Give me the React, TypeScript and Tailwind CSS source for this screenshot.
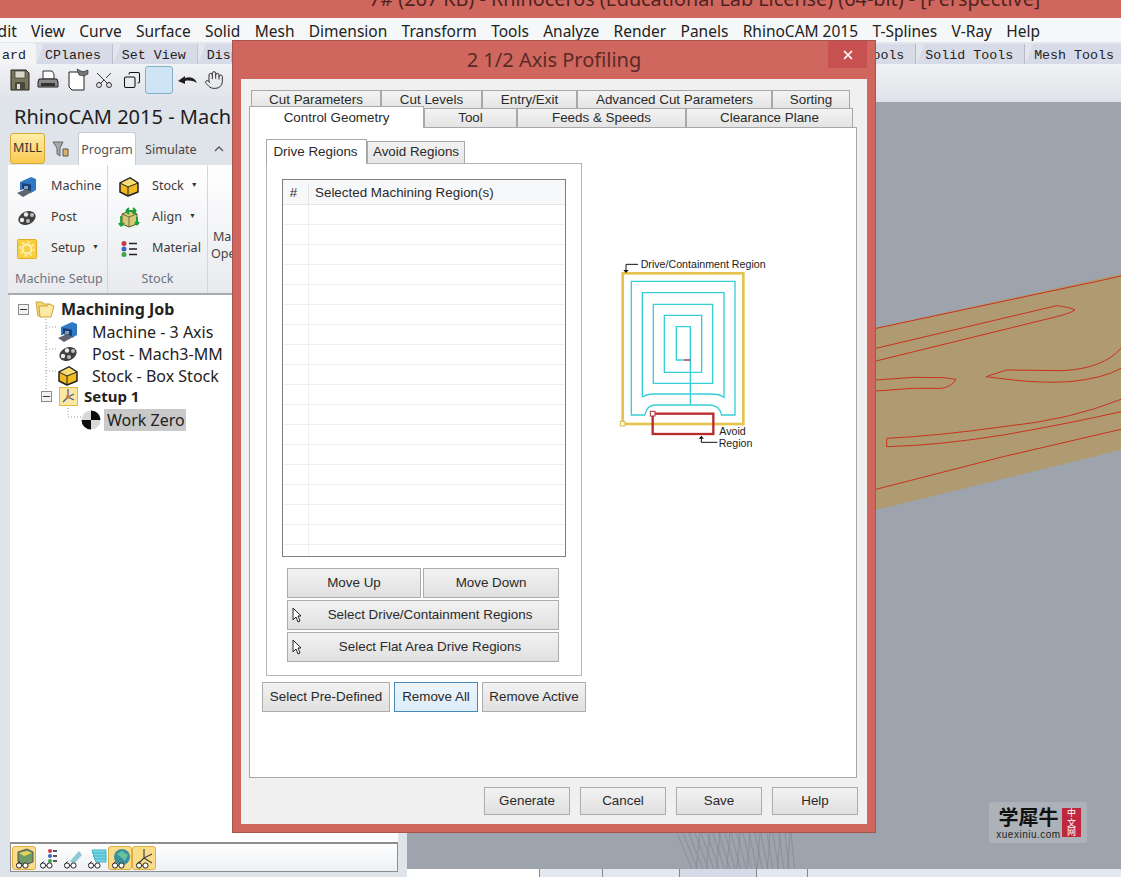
import { Copy, Hand, Scissors, X } from "lucide-react"

const menus = ["Edit", "View", "Curve", "Surface", "Solid", "Mesh", "Dimension", "Transform", "Tools", "Analyze", "Render", "Panels", "RhinoCAM 2015", "T-Splines", "V-Ray", "Help"]

const topTabs = ["CPlanes", "Set View", "Display", "Select", "Viewport", "Visibility", "Transform", "Tools", "Curve Tools", "Surface Tools", "Solid Tools", "Mesh Tools"]

function MachineIcon({ size = 20 }: { size?: number }) {
  return (
    <svg width={size} height={size} viewBox="0 0 20 20">
      <path d="M3 5l11-5 5 2v11l-5 3V8L5 7v6H3z" fill="#2f78c4" />
      <path d="M5 6l9 1.500V15L5 12z" fill="#173f78" />
      <path d="M0 16l9-4 6 3-9 5z" fill="#5f6570" />
      <path d="M8 9v3M10 9v3" stroke="#fff" strokeWidth="1" />
    </svg>
  )
}

function PostIcon({ size = 20 }: { size?: number }) {
  return (
    <svg width={size} height={size} viewBox="0 0 20 20">
      <ellipse cx="10" cy="10" rx="9" ry="6.500" fill="#3f3f3f" transform="rotate(-25 10 10)" />
      <circle cx="5" cy="12" r="2.200" fill="#ececec" />
      <circle cx="9" cy="6.500" r="2.200" fill="#ececec" />
      <circle cx="15" cy="7" r="2" fill="#bdbdbd" />
      <circle cx="11" cy="13" r="2" fill="#bdbdbd" />
    </svg>
  )
}

function StockIcon({ size = 20 }: { size?: number }) {
  return (
    <svg width={size} height={size} viewBox="0 0 20 20">
      <path d="M1 6l10-5 8 5v9l-10 4-8-4z" fill="#efb91f" stroke="#222" strokeWidth="1.500" strokeLinejoin="round" />
      <path d="M1 6l8 4 10-4-8-5z" fill="#f9dd74" stroke="#222" strokeWidth="1" strokeLinejoin="round" />
      <path d="M9 10v9" stroke="#222" strokeWidth="1" />
    </svg>
  )
}

function SetupIcon() {
  return (
    <svg width="20" height="20" viewBox="0 0 20 20">
      <rect x="0.500" y="0.500" width="19" height="19" rx="1" fill="#f8cf3e" stroke="#e0ac22" />
      <circle cx="10" cy="10" r="4.500" fill="none" stroke="#fff2b8" strokeWidth="2" />
      <circle cx="10" cy="10" r="7" fill="none" stroke="#fff2b8" strokeWidth="1.600" strokeDasharray="2.500 3" />
    </svg>
  )
}

function AlignIcon() {
  return (
    <svg width="22" height="22" viewBox="0 0 22 22">
      <path d="M4 7l8-3 7 3v10l-8 3-7-3z" fill="#d8c778" stroke="#4f5d2a" />
      <path d="M4 7l7 3 8-3M11 10v10" stroke="#4f5d2a" strokeWidth="0.800" fill="none" />
      <path d="M8 4h10M8 4l3-3M8 4l3 3M18 4l-3-3M18 4l-3 3M3 9v10M3 19l-2-3M3 19l3-3M19 10v8M19 18l-2-3M19 18l2-3" stroke="#18a038" strokeWidth="1.800" fill="none" />
    </svg>
  )
}

function MaterialIcon() {
  return (
    <svg width="18" height="18" viewBox="0 0 18 18">
      <circle cx="4" cy="3.500" r="2.500" fill="#c63a4a" />
      <circle cx="4" cy="9" r="2.500" fill="#3c62c0" />
      <circle cx="4" cy="14.500" r="2.500" fill="#3fa548" />
      <path d="M9 3.500h8M9 9h8M9 14.500h8" stroke="#222" strokeWidth="1.600" />
    </svg>
  )
}

function SetupTreeIcon() {
  return (
    <svg width="19" height="19" viewBox="0 0 19 19">
      <rect x="0.500" y="0.500" width="18" height="18" fill="#fbe7a2" stroke="#e3b93a" />
      <path d="M9 2v8M9 10l-5 5M9 10l6 3M9 10l6-3" stroke="#3c5c98" strokeWidth="1.200" />
      <circle cx="9" cy="10" r="2" fill="#d0803a" />
    </svg>
  )
}

function FolderIcon() {
  return (
    <svg width="20" height="20" viewBox="0 0 20 20">
      <path d="M1 3h6l2 2h6v12H3z" fill="#f5d774" stroke="#cfa63a" />
      <path d="M4 7h8l2-2 5 2-3 11H5z" fill="#fbe9a6" stroke="#cfa63a" />
    </svg>
  )
}

function ZeroIcon() {
  return (
    <svg width="20" height="20" viewBox="0 0 20 20">
      <circle cx="10" cy="10" r="9.500" fill="#d8d8d8" />
      <path d="M10 10V0.500A9.500 9.500 0 0 1 19.500 10zM10 10v9.500A9.500 9.500 0 0 1 0.500 10z" fill="#0c0c0c" />
    </svg>
  )
}

function Glasses() {
  return (
    <g fill="none" stroke="#222" strokeWidth="1">
      <circle cx="6" cy="18.500" r="2.600" fill="#fff" />
      <circle cx="12.500" cy="18.500" r="2.600" fill="#fff" />
      <path d="M8.600 18.500h1.300M3.500 17.500l3-3" />
    </g>
  )
}

const bottomIcons = [
  { on: true, art: <><path d="M5 5l9-3 6 3v10l-8 3-7-3z" fill="#6f9a63" stroke="#555" /><path d="M6 6l8-2 5 2-8 3z" fill="#e6d260" /></> },
  { on: false, art: <><circle cx="13" cy="4" r="2" fill="#c63a4a" /><circle cx="13" cy="9" r="2" fill="#3c62c0" /><circle cx="13" cy="14" r="2" fill="#3fa548" /><path d="M16 4h4M16 9h4M16 14h4" stroke="#222" strokeWidth="1.400" /></> },
  { on: false, art: <path d="M9 14l9-10 3 4-8 9z" fill="#8ec9d4" /> },
  { on: false, art: <path d="M7 3h14v12H11zM7 6h14M8 9h13M9 12h12" fill="#7fd5e0" stroke="#39b4cc" strokeWidth="1" /> },
  { on: true, art: <><circle cx="13" cy="10" r="8" fill="#3d8f9c" /><path d="M8 7l5-3 6 4-3 6z" fill="#65c1a0" /></> },
  { on: true, art: <path d="M11 2v9M11 11l8-4M11 11l8 5M11 11l-5 5" stroke="#444" strokeWidth="1.200" fill="none" /> },
]

function ToolbarIcons() {
  return (
    <div className="flex items-center h-full pl-[10px] pb-[7px] text-[#222]">
      <svg width="20" height="22" viewBox="0 0 20 22">
        <path d="M1 1h15l3 3v17H1z" fill="#77775c" stroke="#222" />
        <rect x="5" y="2" width="10" height="7" fill="#d8d8c8" stroke="#222" strokeWidth="0.600" />
        <rect x="5" y="13" width="10" height="8" fill="#4a4a3c" />
        <rect x="7" y="15" width="3" height="5" fill="#ddd" />
      </svg>
      <svg width="22" height="20" viewBox="0 0 22 20" className="ml-[7px]">
        <path d="M6 1h9l2 3v5H6z" fill="#fff" stroke="#333" />
        <path d="M2 9h18l1 3v5H1v-5z" fill="#8a8a8a" stroke="#222" />
        <rect x="4" y="13" width="14" height="3" fill="#333" />
      </svg>
      <svg width="21" height="24" viewBox="0 0 21 24" className="ml-[9px]">
        <path d="M1 4h10l5 0v18H4l-3-3z" fill="#fff" stroke="#222" />
        <path d="M9 1l6 3 5-2v4l-4 2-5-1z" fill="#777" stroke="#222" strokeWidth="0.600" />
      </svg>
      <Scissors size={20} strokeWidth={1.200} className="ml-[5px] -rotate-90 text-[#333]" />
      <Copy size={18} strokeWidth={1.400} className="ml-[9px] -scale-x-100 text-[#111]" />
      <div className="ml-[4px] w-[28px] h-[28px] rounded-[3px] border border-[#7fb1c9] bg-[#cfe5f5]" />
      <svg width="21" height="14" viewBox="0 0 21 14" className="ml-[4px]">
        <path d="M1 8l7-5v2c6-2 10 0 12 5-3-2-7-3-12-2v3z" fill="#1f1f1f" />
      </svg>
      <Hand size={20} strokeWidth={1.200} className="ml-[6px] text-[#333]" />
    </div>
  )
}

function RibbonRow({ icon, label, caret, gap }: { icon: React.ReactNode; label: string; caret?: boolean; gap: string }) {
  return (
    <div className="flex items-center h-[31px]">
      <div className="w-[24px] flex justify-center shrink-0">{icon}</div>
      <span className={"text-[12.600px] text-[#3b3b3b] whitespace-nowrap " + gap}>{label}</span>
      {caret && <span className="ml-[7px] mb-[3px] text-[7px] text-[#333]">▼</span>}
    </div>
  )
}

function DlgButton({ children, className }: { children: React.ReactNode; className: string }) {
  return (
    <button className={"flex items-center justify-center pt-[1px] border border-[#acacac] bg-gradient-to-b from-[#f2f2f2] to-[#e0e0e0] text-[13.4px] text-[#2a2a2a] whitespace-nowrap " + className}>
      {children}
    </button>
  )
}

function Arrow() {
  return (
    <svg width="10" height="17" viewBox="0 0 10 17" className="shrink-0">
      <path d="M1 1v12l3-3 2 5 2-1-2-5h3z" fill="#fff" stroke="#111" strokeWidth="0.900" strokeLinejoin="round" />
    </svg>
  )
}

function Tab({ label, className }: { label: string; className: string }) {
  return (
    <div className={"flex items-center justify-center pt-[1px] border border-[#a8a8a8] border-b-0 bg-gradient-to-b from-[#f3f3f3] to-[#e4e4e4] text-[13.4px] text-[#2a2a2a] whitespace-nowrap " + className}>
      {label}
    </div>
  )
}

function Diagram() {
  return (
    <svg width="170" height="210" viewBox="0 0 510 630" className="ml-[24px] mt-[122px] shrink-0" fontFamily="'Liberation Sans', sans-serif" fontSize="32">
      <rect x="38" y="70" width="362" height="452" fill="#fff" stroke="#e6c34f" strokeWidth="8" />
      <g fill="none" stroke="#35cfd8" strokeWidth="4">
        <path d="M105 495H64V94H375V495H335Q330 467 300 465H135Q108 467 105 495" />
        <path d="M97 442V128H342V442Q330 432 300 432H130Q110 432 97 442" />
        <path d="M130 163H308V400H130Z" />
        <path d="M163 196H275V367H163Z" />
        <path d="M222 330H199V230H241V465" />
      </g>
      <path d="M222 330H241" stroke="#8a2a50" strokeWidth="4" />
      <rect x="128" y="491" width="182" height="61" fill="none" stroke="#b92a2a" strokeWidth="7" />
      <rect x="121" y="484" width="14" height="14" fill="#fff" stroke="#a33" strokeWidth="3" />
      <rect x="31" y="514" width="14" height="14" fill="#fffbd0" stroke="#d8bc50" strokeWidth="3" />
      <path d="M84 43H48V62" fill="none" stroke="#111" strokeWidth="3" />
      <path d="M40 60h16l-8 9z" fill="#111" />
      <path d="M322 577H274V562" fill="none" stroke="#111" strokeWidth="3" />
      <path d="M266 566h16l-8-9z" fill="#111" />
      <text x="92" y="53" fill="#222">Drive/Containment Region</text>
      <text x="328" y="554" fill="#222">Avoid</text>
      <text x="326" y="591" fill="#222">Region</text>
    </svg>
  )
}

export default function App() {
  const meshLines = Array.from({ length: 20 }, (_, i) => i)
  const rows = Array.from({ length: 18 }, (_, i) => i)

  return (
    <div className="relative w-[1121px] h-[877px] overflow-hidden flex flex-col bg-[#9da4ad] font-['Noto_Sans',sans-serif]">
      <div className="h-[18px] shrink-0 overflow-hidden bg-[#d0675f] pl-[369px]">
        <div className="-mt-[13px] text-[19.800px] leading-[24px] text-[#4f2320] whitespace-nowrap">7# (267 KB) - Rhinoceros (Educational Lab License) (64-bit) - [Perspective]</div>
      </div>

      <div className="h-[24px] shrink-0 pt-[3px] bg-[#f6f7f8] flex items-center gap-[14.300px] -ml-[11px] text-[15.500px] text-[#222] whitespace-nowrap">
        {menus.map((m) => (
          <span key={m}>{m}</span>
        ))}
      </div>

      <div className="h-[22px] shrink-0 bg-[#e3e6ed] flex items-end font-['Liberation_Mono',monospace] text-[13.300px] text-[#222] whitespace-nowrap overflow-hidden">
        <div className="h-[21px] w-[36px] bg-[#f3f4f6] rounded-tr-[4px] flex justify-end items-center pr-[10px] pt-[4px] shrink-0">ard</div>
        {topTabs.map((t) => (
          <div key={t} className="h-[20px] shrink-0 flex items-center pl-[9px] pr-[11px] pt-[4px] bg-[#d7dbe8] [clip-path:polygon(0_100%,8px_0,100%_0,100%_100%)] border-r border-[#b5b9c6]">{t}</div>
        ))}
      </div>

      <div className="h-[38px] shrink-0 bg-gradient-to-b from-[#f1f2f5] to-[#dfe2e8]">
        <ToolbarIcons />
      </div>

      <div className="flex-1 flex min-h-0">
        <div className="w-[407px] shrink-0 bg-[#dfe3ea] pl-[8px] pr-[9px] pb-[5px] flex flex-col">
          <div className="h-[30px] shrink-0 pl-[6px] flex items-center text-[20px] text-[#1d1d1d] whitespace-nowrap">RhinoCAM 2015 - Machining Operations</div>
          <div className="h-[33px] shrink-0 flex items-end pl-[2px]">
            <div className="w-[35px] h-[31px] mb-[1px] rounded-[3px] border border-[#d8aa3c] bg-gradient-to-b from-[#ffeea8] to-[#fbc94a] flex items-center justify-center text-[12.600px] text-[#333]">MILL</div>
            <svg width="17" height="17" viewBox="0 0 17 17" className="ml-[7px] mb-[7px]">
              <path d="M1 1h10L8 7v8l-3-2V7z" fill="#a9a9a9" stroke="#666" />
              <path d="M11 8h5v7h-5z" fill="#d9b26a" stroke="#555" />
            </svg>
            <div className="ml-[9px] w-[58px] h-[33px] pt-[2px] bg-white border border-[#c8ccd4] border-b-0 rounded-t-[3px] flex items-center justify-center text-[12.600px] text-[#555]">Program</div>
            <div className="ml-[9px] h-[33px] pt-[3px] flex items-center text-[12.600px] text-[#444]">Simulate</div>
            <svg width="10" height="7" viewBox="0 0 10 7" className="ml-[17px] mb-[13px]">
              <path d="M1 6l4-4 4 4" fill="none" stroke="#555" strokeWidth="1.300" />
            </svg>
          </div>
          <div className="h-[130px] shrink-0 flex bg-gradient-to-b from-white to-[#e8eaee] border-b-2 border-[#a9abb0]">
            <div className="w-[100px] shrink-0 border-r border-[#d3d6dc] flex flex-col pt-[6px] pl-[7px]">
              <RibbonRow icon={<MachineIcon />} label="Machine" gap="ml-[12px]" />
              <RibbonRow icon={<PostIcon />} label="Post" gap="ml-[12px]" />
              <RibbonRow icon={<SetupIcon />} label="Setup" caret gap="ml-[12px]" />
              <div className="mt-[6px] text-[12.600px] text-[#6e7480] whitespace-nowrap">Machine Setup</div>
            </div>
            <div className="w-[100px] shrink-0 border-r border-[#d3d6dc] flex flex-col pt-[6px] pl-[9px]">
              <RibbonRow icon={<StockIcon />} label="Stock" caret gap="ml-[11px]" />
              <RibbonRow icon={<AlignIcon />} label="Align" caret gap="ml-[11px]" />
              <RibbonRow icon={<MaterialIcon />} label="Material" gap="ml-[11px]" />
              <div className="mt-[6px] text-center pr-[9px] text-[12.600px] text-[#6e7480]">Stock</div>
            </div>
            <div className="pl-[3px] pt-[63px] text-[12.600px] leading-[17px] text-[#444] text-center">Machining<br />Operations</div>
          </div>

          <div className="flex-1 min-h-0 ml-[2px] bg-white border-b-2 border-[#8e8e8e] pt-[2px] relative text-[16px] text-[#222]">
            <svg width="110" height="130" viewBox="0 0 110 130" className="absolute left-0 top-0" fill="none" stroke="#9a9a9a" strokeDasharray="1 2">
              <path d="M36 12v86M36 32h12M36 54h12M36 76h12M36 98h-2M58 110v12h14" />
            </svg>
            <div className="relative flex items-center h-[22px] mt-[1px] pl-[8px]">
              <div className="w-[11px] h-[11px] border border-[#8b8b8b] bg-[#f2f2f2] flex items-center justify-center shrink-0"><div className="w-[7px] h-px bg-[#333]" /></div>
              <div className="ml-[6px]"><FolderIcon /></div>
              <span className="ml-[6px] font-bold">Machining Job</span>
            </div>
            <div className="relative flex items-center h-[22px] pl-[48px] mt-[1px]">
              <MachineIcon />
              <span className="ml-[14px]">Machine - 3 Axis</span>
            </div>
            <div className="relative flex items-center h-[22px] pl-[48px]">
              <PostIcon />
              <span className="ml-[14px]">Post - Mach3-MM</span>
            </div>
            <div className="relative flex items-center h-[21px] pl-[48px]">
              <StockIcon />
              <span className="ml-[14px]">Stock - Box Stock</span>
            </div>
            <div className="relative flex items-center h-[21px] pl-[31px]">
              <div className="w-[11px] h-[11px] border border-[#8b8b8b] bg-[#f2f2f2] flex items-center justify-center shrink-0"><div className="w-[7px] h-px bg-[#333]" /></div>
              <div className="ml-[7px]"><SetupTreeIcon /></div>
              <span className="ml-[6px] font-bold text-[15px]">Setup 1</span>
            </div>
            <div className="relative flex items-center h-[25px] pl-[71px]">
              <ZeroIcon />
              <span className="ml-[3px] pl-[3px] pr-[1px] bg-[#c9c9c9] h-[22px] leading-[22px]">Work Zero</span>
            </div>
          </div>

          <div className="h-[28px] shrink-0 ml-[2px] bg-gradient-to-b from-white to-[#eef0f3] border border-t-0 border-[#8e8e8e] flex items-center pl-[1px]">
            {bottomIcons.map((b, i) => (
              <div key={i} className={"w-[24px] h-[24px] rounded-[3px] flex items-center justify-center " + (b.on ? "bg-[#fbdc88] border border-[#dcae45]" : "")}>
                <svg width="22" height="22" viewBox="0 0 22 22">
                  {b.art}
                  <Glasses />
                </svg>
              </div>
            ))}
          </div>
        </div>

        <div className="flex-1 flex flex-col min-w-0">
          <div className="flex-1 relative bg-[#9da4ad] min-h-0">
            <svg viewBox="407 102 714 767" className="absolute inset-0 w-full h-full">
              <path d="M700 366L1121 274V450L700 553Z" fill="#b09a72" />
              <g stroke="#848b94" strokeWidth="0.800">
                {meshLines.map((i) => (
                  <path key={i} d={`M${677 + i * 6} 833L${692 + i * 5.400} 869`} />
                ))}
                {meshLines.slice(0, 10).map((i) => (
                  <path key={i} d={`M${700 + i * 10} 833L${696 + i * 10.200} 869`} />
                ))}
              </g>
              <g transform="translate(870 280) scale(0.3333)" fill="none" stroke="#c8321e" strokeWidth="3">
                <path d="M18 145L700 0L753 -12" />
                <path d="M18 205L560 77Q600 82 615 90Q600 100 560 110L18 243" />
                <path d="M18 300L130 292L220 293L258 298Q245 320 215 325L130 325L18 333" />
                <path d="M753 205Q700 265 580 272L410 270L348 290L430 300Q520 310 600 305Q700 295 753 265" />
                <path d="M753 358Q600 420 400 440Q200 468 50 475L50 500Q200 497 400 465Q600 430 753 395" />
                <path d="M18 628L400 530L753 448" />
              </g>
            </svg>
            <div className="absolute left-[582px] top-[700px] w-[98px] h-[41px] rounded-[3px] bg-[#adb2b9] flex items-center pl-[6px]">
              <div className="flex flex-col items-center w-[67px]">
                <span className="text-[20px] leading-[24px] font-bold text-[#111] whitespace-nowrap font-['Noto_Sans_CJK_SC',sans-serif]">学犀牛</span>
                <span className="text-[10px] leading-[11px] tracking-[0.500px] text-[#222] font-['Liberation_Sans',sans-serif]">xuexiniu.com</span>
              </div>
              <div className="w-[19px] h-[29px] bg-[#c0283f] text-white text-[9px] leading-[9.500px] flex flex-col items-center justify-center font-['Noto_Sans_CJK_SC',sans-serif]">
                <span>中</span>
                <span>文</span>
                <span>网</span>
              </div>
            </div>
          </div>
          <div className="h-[8px] shrink-0 bg-[#e3e7ef] flex">
            <div className="w-[133px] bg-white border-r border-[#888]" />
            <div className="w-[63px] border-r border-[#888]" />
            <div className="w-[77px] border-r border-[#888]" />
            <div className="w-[77px] bg-[#d7dbe8] border-r border-[#888]" />
            <div className="w-[51px] border-r border-[#888]" />
          </div>
        </div>
      </div>

      <div className="absolute left-[232px] top-[40px] w-[644px] h-[793px] bg-[#d0675f] border border-[#a8534d] flex flex-col px-[8px] pb-[8px] font-['Liberation_Sans',sans-serif]">
        <div className="h-[38px] shrink-0 flex items-center justify-center text-[20px] text-[#5a2a27] font-['Noto_Sans',sans-serif]">2 1/2 Axis Profiling</div>
        <div className="absolute right-[8px] top-0 w-[39px] h-[27px] bg-[#c75050] flex items-center justify-center text-white">
          <X size={14} strokeWidth={3} />
        </div>
        <div className="flex-1 bg-[#f0f0f0] flex flex-col px-[8px] pt-[11px] min-h-0">
          <div className="h-[18px] shrink-0 flex ml-[2px]">
            <Tab label="Cut Parameters" className="w-[130px]" />
            <Tab label="Cut Levels" className="w-[101px]" />
            <Tab label="Entry/Exit" className="w-[95px]" />
            <Tab label="Advanced Cut Parameters" className="w-[195px]" />
            <Tab label="Sorting" className="w-[78px]" />
          </div>
          <div className="h-[19px] shrink-0 flex items-end relative">
            <div className="relative z-10 w-[175px] h-[22px] -mb-[1px] pt-[1px] bg-white border border-[#a8a8a8] border-b-0 flex items-center justify-center text-[13.4px] text-[#2a2a2a]">Control Geometry</div>
            <Tab label="Tool" className="w-[93px] h-[19px]" />
            <Tab label="Feeds & Speeds" className="w-[169px] h-[19px]" />
            <Tab label="Clearance Plane" className="w-[167px] h-[19px]" />
          </div>
          <div className="h-[651px] shrink-0 w-[608px] bg-white border border-[#a8a8a8] flex">
            <div className="w-[336px] shrink-0 pl-[12px] pt-[11px]">
              <div className="ml-[4px] h-[24px] flex items-end">
                <div className="relative z-10 w-[101px] h-[25px] -mb-[1px] bg-white border border-[#a8a8a8] border-b-0 flex items-center justify-center pr-[2px] text-[13.4px] text-[#2a2a2a]">Drive Regions</div>
                <div className="w-[98px] h-[22px] border border-[#a8a8a8] border-b-0 bg-gradient-to-b from-[#f2f2f2] to-[#e6e6e6] flex items-center justify-center text-[13.4px] text-[#2a2a2a]">Avoid Regions</div>
              </div>
              <div className="ml-[4px] w-[316px] h-[513px] border border-[#b5b5b5] pl-[15px] pt-[15px]">
                <div className="w-[284px] h-[378px] border border-[#7e7e7e] overflow-hidden">
                  <div className="h-[25px] pt-[3px] flex items-center bg-[#f7f8fa] border-b border-[#e6e6e6] text-[13.4px] text-[#2a2a2a]">
                    <div className="w-[26px] h-full flex items-center justify-center border-r border-[#e6e6e6] pr-[4px]">#</div>
                    <div className="pl-[6px]">Selected Machining Region(s)</div>
                  </div>
                  {rows.map((r) => (
                    <div key={r} className="h-[20px] flex border-b border-[#eeeeee]">
                      <div className="w-[26px] border-r border-[#eeeeee]" />
                    </div>
                  ))}
                </div>
                <div className="ml-[5px] mt-[11px] flex flex-col gap-[2px]">
                  <div className="flex gap-[2px]">
                    <DlgButton className="w-[134px] h-[30px]">Move Up</DlgButton>
                    <DlgButton className="w-[136px] h-[30px]">Move Down</DlgButton>
                  </div>
                  <DlgButton className="w-[272px] h-[30px] pl-[4px]">
                    <Arrow />
                    <span className="flex-1 text-center">Select Drive/Containment Regions</span>
                  </DlgButton>
                  <DlgButton className="w-[272px] h-[30px] pl-[4px]">
                    <Arrow />
                    <span className="flex-1 text-center">Select Flat Area Drive Regions</span>
                  </DlgButton>
                </div>
              </div>
              <div className="mt-[6px] flex gap-[4px]">
                <DlgButton className="w-[128px] h-[30px]">Select Pre-Defined</DlgButton>
                <button className="w-[84px] h-[30px] pt-[1px] border border-[#4a8ab8] bg-gradient-to-b from-[#ecf5fc] to-[#dcecf8] text-[13.4px] text-[#2a2a2a]">Remove All</button>
                <DlgButton className="w-[104px] h-[30px]">Remove Active</DlgButton>
              </div>
            </div>
            <Diagram />
          </div>
          <div className="mt-[9px] pr-[1px] flex justify-end gap-[10px]">
            <DlgButton className="w-[86px] h-[28px]">Generate</DlgButton>
            <DlgButton className="w-[86px] h-[28px]">Cancel</DlgButton>
            <DlgButton className="w-[86px] h-[28px]">Save</DlgButton>
            <DlgButton className="w-[86px] h-[28px]">Help</DlgButton>
          </div>
        </div>
      </div>
    </div>
  )
}
